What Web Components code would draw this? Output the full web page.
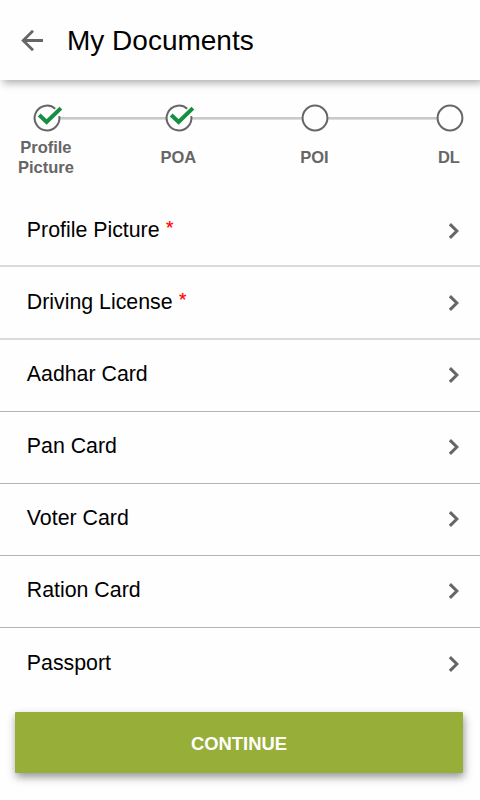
<!DOCTYPE html>
<html lang="en">
<head>
<meta charset="utf-8">
<title>My Documents</title>
<style>
body { margin: 0; background: #fefefe; color: #000; font-family: "Liberation Sans", Arial, sans-serif; }
</style>
</head>
<body>
<documents-screen></documents-screen>
<script>
function define(name, html) {
  const template = document.createElement('template');
  template.innerHTML = html;
  customElements.define(name, class extends HTMLElement {
    constructor() {
      super();
      this.attachShadow({ mode: 'open' }).append(template.content.cloneNode(true));
    }
  });
}

define('app-header', `
<style>
:host { display: flex; align-items: center; box-sizing: border-box; height: 80px; flex: none; padding: 2px 0 0 21px; gap: 24px; background: #fefefe; box-shadow: 3px 3px 8px rgba(0,0,0,.32); }
svg { display: block; width: 22px; height: 22px; }
h1 { margin: 0; font-size: 28px; line-height: 32px; font-weight: 400; }
</style>
<svg viewBox="0 0 22 22" fill="none" stroke="#666" stroke-width="2.8"><path d="M22 10.5H2.2M12 .8L2.2 10.5L12 20.2"/></svg>
<h1><slot></slot></h1>`);

define('progress-step', `
<style>
:host { display: flex; flex-direction: column; align-items: center; width: 80px; }
svg { display: block; width: 30px; height: 30px; overflow: visible; }
.label { display: flex; align-items: center; height: 40px; margin: 4px 1.4px 0 0; font-size: 16.5px; line-height: 20px; font-weight: 700; color: #666; text-align: center; }
.tick, .arc { display: none; fill: none; }
:host([done]) .tick, :host([done]) .arc { display: inline; }
:host([done]) .ring { stroke: none; }
</style>
<svg viewBox="0 0 30 30">
<circle class="ring" cx="15" cy="15" r="12.4" fill="#fefefe" stroke="#666" stroke-width="2"/>
<path class="arc" d="M23.2 5.7A12.4 12.4 0 1 0 27.3 13.2" stroke="#666" stroke-width="2"/>
<path class="tick" d="M7.2 12L14.6 19L28.9 5.1" stroke="#159040" stroke-width="4"/>
</svg>
<div class="label"><slot></slot></div>`);

define('progress-steps', `
<style>
:host { display: grid; grid-template-columns: 132.5px 136px 134.5px 80px; flex: none; box-sizing: border-box; height: 115.4px; padding: 23.3px 0 0 6.6px;
background: linear-gradient(#c9c9c9,#c9c9c9) 47px 37px / 402px 2.6px no-repeat; }
</style>
<slot></slot>`);

define('document-row', `
<style>
:host { display: flex; align-items: center; justify-content: space-between; flex: none; box-sizing: border-box; height: 72.1px; padding: 0 21px 2px 26.8px; border-bottom: 1px solid #b5b5b5; }
:host([soft]) { border-bottom: 2px solid #dadada; padding-bottom: 1px; }
:host([last]) { border-bottom: 0; padding-bottom: 3px; }
.name { display: flex; font-size: 21.33px; line-height: 24px; }
.star { display: none; font-size: 19px; line-height: 19px; margin-left: 6.5px; color: #f00; -webkit-text-stroke: .2px #f00; }
:host([required]) .star { display: block; }
svg { display: block; width: 11px; height: 16px; margin-top: 2px; }
</style>
<span class="name"><slot></slot><span class="star">*</span></span>
<svg viewBox="0 0 11 16" fill="none" stroke="#666" stroke-width="3.1"><path d="M1.9 1.1L8.9 8L1.9 14.9"/></svg>`);

define('action-button', `
<style>
:host { display: block; flex: none; margin: 12px 17px 0 15px; }
button { display: block; width: 100%; height: 60.5px; padding: 3px 0 0; border: 0; border-radius: 1px; background: #97ae38; color: #fff; font: 700 18.4px/22px "Liberation Sans", Arial, sans-serif; box-shadow: 1px 4px 8px rgba(0,0,0,.42); }
</style>
<button type="button"><slot></slot></button>`);

define('documents-screen', `
<style>
:host { display: flex; flex-direction: column; width: 480px; height: 800px; overflow: hidden; }
main { display: flex; flex-direction: column; }
</style>
<app-header>My Documents</app-header>
<main>
<progress-steps>
<progress-step done>Profile<br>Picture</progress-step>
<progress-step done>POA</progress-step>
<progress-step>POI</progress-step>
<progress-step>DL</progress-step>
</progress-steps>
<document-row required soft>Profile Picture</document-row>
<document-row required soft>Driving License</document-row>
<document-row>Aadhar Card</document-row>
<document-row>Pan Card</document-row>
<document-row>Voter Card</document-row>
<document-row>Ration Card</document-row>
<document-row last>Passport</document-row>
</main>
<action-button>CONTINUE</action-button>`);
</script>
</body>
</html>
